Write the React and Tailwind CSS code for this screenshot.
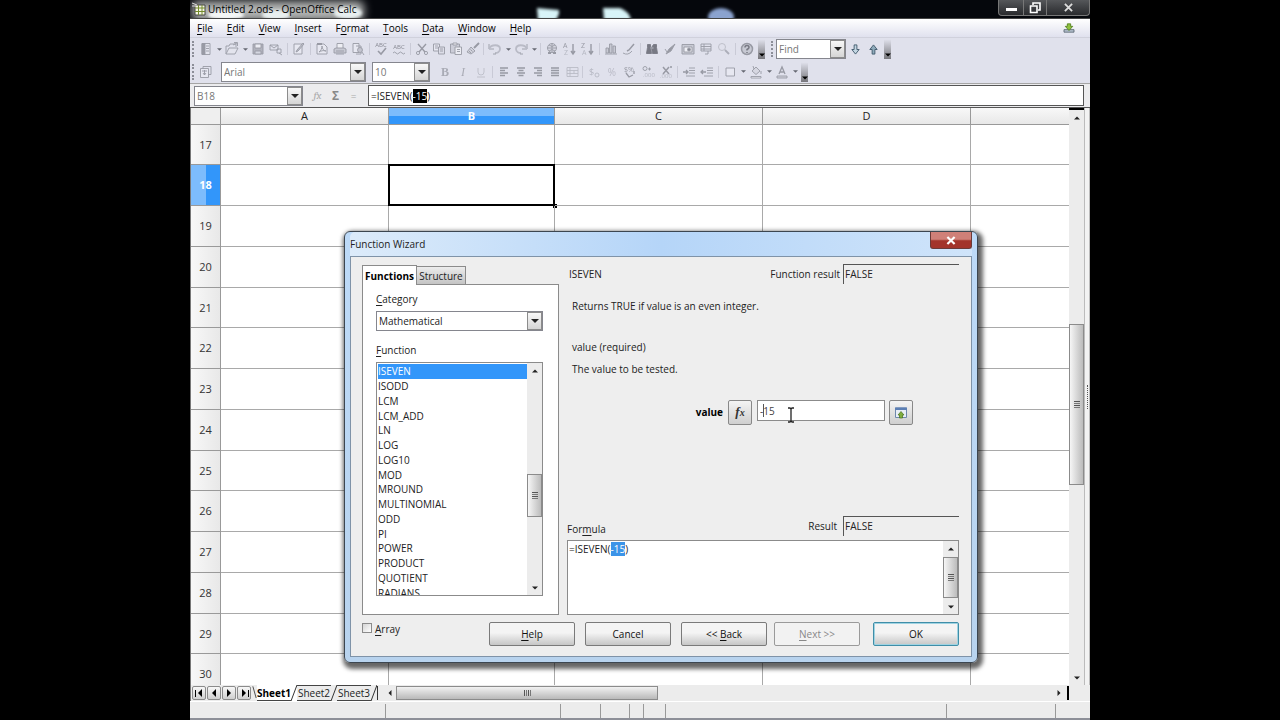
import { useState } from "react";

const columns = ["A", "B", "C", "D", ""];
const rows = [17, 18, 19, 20, 21, 22, 23, 24, 25, 26, 27, 28, 29, 30];
const functions = [
  "ISEVEN", "ISODD", "LCM", "LCM_ADD", "LN", "LOG", "LOG10", "MOD", "MROUND",
  "MULTINOMIAL", "ODD", "PI", "POWER", "PRODUCT", "QUOTIENT", "RADIANS",
];
const menus = ["File", "Edit", "View", "Insert", "Format", "Tools", "Data", "Window", "Help"];

const icons = {
  new: <><path d="M4 2.5h8v11H4z" fill="#e4e5ee" /><path d="M4 2.5h3v11H4z" fill="#8c8e98" /><path d="M8 5h3M8 7.5h3M8 10h3" /></>,
  open: <><path d="M2 13V5h3l1-2h6v3" /><path d="M2 13l3-6h9l-3 6z" fill="#e4e5ee" /><path d="M9 4l4-2M10 1.5h3.5V5" /></>,
  save: <><path d="M3 3h10v10H3z" fill="#a9abb5" /><path d="M5 3h6v4H5z" fill="#eeeff5" /><path d="M5 10h6v3H5z" fill="#d4d6e0" /></>,
  mail: <><path d="M2 4h8v5H2zM2 4l4 3 4-3" /><path d="M9 8h4v4H9zM11 12l3 2" /></>,
  edit: <><path d="M3 3h8v10H3z" fill="#e9eaf2" /><path d="M13 3l-6 7-2 1 1-2 6-7z" fill="#bbbdc8" /></>,
  pdf: <><path d="M3 3h7l3 3v7H3z" fill="#e9eaf2" /><path d="M5 11c2-1 3-4 3-6 0 3 2 5 4 5-3-1-5 0-7 1z" /><path d="M3 3h5" strokeWidth="2" /></>,
  print: <><path d="M5 7V2.5h6V7" fill="#f0f1f6" /><path d="M2 8l2-1h8l2 1v4H2z" fill="#c3c5cf" /><path d="M4 13h8M4 10h8" /></>,
  preview: <><path d="M3 2.5h6v9H3zM6 5h5v8H6" fill="#e9eaf2" /><circle cx="10" cy="9" r="2.5" /><path d="M12 11l2 3" /></>,
  spell: <><text x="8" y="6" textAnchor="middle" fontSize="6" stroke="none" fill="#777983">ABC</text><path d="M5 10l3 3 5-6" strokeWidth="1.6" /></>,
  autospell: <><text x="8" y="8" textAnchor="middle" fontSize="6" stroke="none" fill="#777983">ABC</text><path d="M2 12q1.500-2 3 0t3 0 3 0 3 0" /></>,
  cut: <><path d="M4 3l7 8M12 3l-7 8" strokeWidth="1.4" /><circle cx="4" cy="12" r="1.600" /><circle cx="12" cy="12" r="1.600" /></>,
  copy: <><path d="M2.500 3h6v7h-6z" fill="#e9eaf2" /><path d="M7.500 6h6v7h-6z" fill="#dcdde8" /><path d="M4 5h3M4 7h3M9 8h3M9 10h3" /></>,
  paste: <><path d="M2.500 3h9v9h-9z" fill="#c9cad5" /><path d="M5 2h4v2H5zM7 6h6.500v7.500H7z" fill="#eeeff5" /><path d="M9 8.500h3M9 10.500h3" /></>,
  brush: <><path d="M14 2l-5 5" strokeWidth="2" /><path d="M6 6l4 4-4 3-4-2z" fill="#cfd0da" /><path d="M4 10l2 2M5.500 8.500l2 2" /></>,
  undo: <><path d="M2 3v5h5" /><path d="M2 8c2-5 11-5 11 0 0 3-3 4-5 4" strokeWidth="1.800" stroke="#b3b5c0" /><path d="M6 13h3" /></>,
  redo: <><path d="M14 3v5H9" /><path d="M14 8c-2-5-11-5-11 0 0 3 3 4 5 4" strokeWidth="1.800" stroke="#b3b5c0" /><path d="M7 13h3" /></>,
  link: <><circle cx="8" cy="7" r="4.500" fill="#d5d6e0" /><path d="M3.500 7h9M8 2.500v9M5 4q3 3 6 0M5 10q3-3 6 0" /><path d="M4 12h3M9 12h3" strokeWidth="2" /></>,
  sortUp: <><text x="1" y="7" fontSize="7" stroke="none" fill="#8c8e98">A</text><text x="2" y="14" fontSize="7" stroke="none" fill="#aeb0bb">Z</text><path d="M11 3v9M9 10l2 3 2-3" strokeWidth="1.400" /></>,
  sortDown: <><text x="1" y="7" fontSize="7" stroke="none" fill="#8c8e98">Z</text><text x="2" y="14" fontSize="7" stroke="none" fill="#aeb0bb">A</text><path d="M11 3v9M9 10l2 3 2-3" strokeWidth="1.400" /></>,
  chart: <><path d="M3 7h2.500v5H3zM6.500 3H9v9H6.500zM10 5h2.500v7H10z" fill="#c3c5cf" /><path d="M2 13h12" /></>,
  draw: <><path d="M13 3L8 9l-2 1" strokeWidth="1.500" /><path d="M2 12q5 3 9-2" /></>,
  find: <><path d="M3.500 3.500h3v3l1 6h-5l1-6zM9.500 3.500h3v3l1 6h-5l-1-6z" fill="#666872" stroke="#666872" /><path d="M6.500 7h3" strokeWidth="2" /></>,
  nav: <><path d="M13 3L7 8l-3 5 5-3z" fill="#8c8e98" /><path d="M3 8l2 3" /></>,
  gallery: <><path d="M2 3.500h12v9.500H2z" fill="#c4c6d0" /><path d="M4 6h8v5H4z" fill="#f2f3f8" /><circle cx="9" cy="8.500" r="1.500" fill="#777983" /></>,
  sources: <><path d="M3 3h10v7H3zM3 5.500h10M3 8h10M6 3v7" /><path d="M10 10v3H7" /></>,
  zoom: <><circle cx="6" cy="6" r="3.500" stroke="#b3b5c0" /><path d="M9 9l4 4" strokeWidth="2" stroke="#a4a6b1" /></>,
  help: <><circle cx="8" cy="8" r="5.500" fill="#c3c5cf" strokeWidth="1.500" /><path d="M6 6.500q0-2 2-2t2 2q0 1-2 2v1M8 11v1" stroke="#666872" strokeWidth="1.500" /></>,
  styles: <><path d="M5 2.500h8v8H5z" /><path d="M2.500 4.500h8v9h-8z" fill="#e9eaf2" /><path d="M4 7h5M6.500 6v5M5 9l1.500 2L8 9" /></>,
  bold: <text x="8" y="12" textAnchor="middle" fontSize="12" fontWeight="bold" fontFamily="Liberation Serif" stroke="none" fill="#a0a2ac">B</text>,
  italic: <text x="8" y="12" textAnchor="middle" fontSize="12" fontStyle="italic" fontFamily="Liberation Serif" stroke="none" fill="#a0a2ac">I</text>,
  underline: <><path d="M5 4v4q0 3 3 3t3-3V4M4 13h8" stroke="#b6b8c2" /></>,
  left: <path d="M4 4h8M4 6.500h5M4 9h8M4 11.500h5" strokeWidth="1.300" />,
  center: <path d="M4 4h8M5.500 6.500h5M4 9h8M5.500 11.500h5" strokeWidth="1.300" />,
  right: <path d="M4 4h8M7 6.500h5M4 9h8M7 11.500h5" strokeWidth="1.300" />,
  justify: <path d="M4 4h8M4 6.500h8M4 9h8M4 11.500h8" strokeWidth="1.300" />,
  merge: <path d="M3 3.500h11v9H3zM3 6.500h11M3 9.500h11M6 3.500v9M10 6.500v3" stroke="#b3b5c0" />,
  currency: <><text x="3" y="11" fontSize="9" stroke="none" fill="#aeb0bb">$</text><circle cx="11" cy="11" r="2" stroke="#aeb0bb" /></>,
  percent: <text x="8" y="12" textAnchor="middle" fontSize="10" stroke="none" fill="#b3b5c0">%</text>,
  standard: <><text x="2" y="8" fontSize="7" stroke="none" fill="#8c8e98">$%</text><path d="M4 9l3 4 4-2M12 7v3" strokeWidth="1.300" /></>,
  addDec: <><circle cx="5" cy="4.500" r="2" /><path d="M8 5h3M9.500 3.500v3" /><text x="3" y="13" fontSize="6" stroke="none" fill="#aeb0bb">.000</text></>,
  delDec: <><path d="M5 3l6 7M11 3l-6 7M12 3h2" strokeWidth="1.500" /><text x="2" y="14" fontSize="6" stroke="none" fill="#aeb0bb">.000</text></>,
  indent: <><path d="M8 4h6M8 6.500h6M8 9h6M5 12h9" /><path d="M2 8h5M5 6l2 2-2 2" strokeWidth="1.300" /></>,
  outdent: <><path d="M8 4h6M8 6.500h6M8 9h6M5 12h9" /><path d="M7 8H2M4 6L2 8l2 2" strokeWidth="1.300" /></>,
  border: <path d="M4 4h8.500v8H4z" fill="#e9eaf2" />,
  fill: <><path d="M4 7l4-4 4 4-4 3.500zM6 5l-1-3" fill="#d5d6e0" /><path d="M3 12.500h10v1.500H3z" fill="#f5f5fa" /><path d="M13 7v3" /></>,
  fontColor: <><path d="M5 10l3-7 3 7M6 8h4" strokeWidth="1.300" /><path d="M3 12h10v2H3z" fill="#d0d1db" /></>,
};

const fileTools = [
  "new", "v", "open", "v", "save", "mail", "|", "edit", "|", "pdf", "print", "preview", "|", "spell", "autospell", "|",
];
const clipboardTools = ["cut", "copy", "paste", "brush"];
const insertTools = [
  "|", "undo", "v", "redo", "v", "|", "link", "sortUp", "sortDown", "|", "chart", "draw", "|",
  "find", "nav", "gallery", "sources", "zoom", "|", "help",
];
const alignTools = ["left", "center", "right", "justify", "merge"];
const numberTools = [
  "|", "currency", "percent", "standard", "addDec", "delDec", "|", "indent", "outdent", "|",
  "border", "v", "fill", "v", "fontColor", "v",
];

function Icon({ name }) {
  return (
    <svg viewBox="0 0 16 16" className="h-4 w-4 shrink-0 opacity-85" fill="none" stroke="#8c8e98" strokeWidth="0.9">
      {icons[name]}
    </svg>
  );
}

function Triangle({ dir = "down", className = "fill-[#222]" }) {
  const paths = { down: "M0 2h8L4 6z", up: "M0 6h8L4 2z", left: "M6 0v8L2 4z", right: "M2 0v8l4-4z" };
  return (
    <svg viewBox="0 0 8 8" className={`h-[6px] w-[6px] ${className}`}>
      <path d={paths[dir]} />
    </svg>
  );
}

function Tools({ items, narrow }) {
  return items.map((item, i) => {
    if (item === "|") return <span key={i} className="mx-[2px] h-3 w-px bg-[#c9cad6]" />;
    if (item === "v") {
      return (
        <button key={i} aria-label="More" className="flex w-2 justify-center">
          <svg viewBox="0 0 8 8" className="h-[5px] w-[5px] fill-[#666872]"><path d="M0 2h8L4 6z" /></svg>
        </button>
      );
    }
    return (
      <button key={i} aria-label={item} className={`flex shrink-0 justify-center ${narrow ? "w-[17px]" : "w-[18px]"}`}>
        <Icon name={item} />
      </button>
    );
  });
}

function Grip() {
  return <span className="mr-[3px] ml-[2px] h-4 w-[2px] border-l-2 border-dotted border-[#8c8e98]" />;
}

function Overflow() {
  return (
    <button aria-label="Toolbar options" className="ml-[2px] flex h-5 w-[7px] items-end justify-center bg-linear-to-b from-[#e2e3ee] to-[#77777c] pb-px">
      <Triangle className="fill-black" />
    </button>
  );
}

function Combo({ label, value, className, muted = true }) {
  return (
    <div className={`relative h-5 border border-[#85868e] bg-white ${className}`}>
      <select
        aria-label={label}
        className={`block h-full w-full appearance-none bg-transparent pr-4 pl-[2px] outline-none ${muted ? "text-[#777]" : "text-[#222]"}`}
      >
        <option>{value}</option>
      </select>
      <span className="pointer-events-none absolute inset-y-0 right-0 flex w-[15px] items-center justify-center border border-[#8c8c8c] bg-linear-to-b from-[#f8f8f8] to-[#d5d5d5]">
        <svg viewBox="0 0 8 8" className="h-2 w-2 fill-[#222]"><path d="M0 2h8L4 6z" /></svg>
      </span>
    </div>
  );
}

function ScrollBar({ before, thumb, after, className = "w-[15px]" }) {
  return (
    <div className={`flex shrink-0 flex-col bg-[#ececec] ${className}`}>
      <button aria-label="Scroll up" className="flex h-[15px] items-center justify-center"><Triangle dir="up" /></button>
      <div className="flex flex-1 flex-col">
        <div className="basis-0" style={{ flexGrow: before }} />
        <div
          className="flex basis-0 flex-col items-center justify-center gap-px border border-[#8b8b8b] bg-linear-to-r from-[#f6f6f6] to-[#bcbcbc]"
          style={{ flexGrow: thumb }}
        >
          <span className="h-px w-[6px] bg-[#555]" />
          <span className="h-px w-[6px] bg-[#777]" />
          <span className="h-px w-[6px] bg-[#555]" />
          <span className="h-px w-[6px] bg-[#777]" />
        </div>
        <div className="basis-0" style={{ flexGrow: after }} />
      </div>
      <button aria-label="Scroll down" className="flex h-[15px] items-center justify-center"><Triangle /></button>
    </div>
  );
}

// Repeats the prefix invisibly so the mark lands on the selected argument
function SelectedArgument({ markClass, className }) {
  return (
    <div aria-hidden="true" className={`pointer-events-none absolute inset-0 ${className}`}>
      <span className="invisible">=ISEVEN(</span>
      <mark className={markClass}>-15</mark>
    </div>
  );
}

function TitleBar() {
  return (
    <header className="relative flex h-[19px] shrink-0 items-center border-b border-[#444] bg-[#05070c] pl-[2px]">
      <svg className="absolute inset-0 h-full w-full" viewBox="0 0 900 19" preserveAspectRatio="xMinYMin slice" aria-hidden="true">
        <defs>
          <filter id="glow" filterUnits="userSpaceOnUse" x="-20" y="-20" width="300" height="60"><feGaussianBlur stdDeviation="4" /></filter>
          <filter id="soft" x="-30%" y="-50%" width="160%" height="200%"><feGaussianBlur stdDeviation="1.5" /></filter>
        </defs>
        <rect x="2" y="1" width="172" height="20" rx="6" fill="#b2b4b3" filter="url(#glow)" />
        <ellipse cx="36" cy="15" rx="18" ry="5" fill="#f4f6f6" filter="url(#soft)" />
        <ellipse cx="86" cy="15" rx="14" ry="5" fill="#e8efef" filter="url(#soft)" />
        <ellipse cx="158" cy="13" rx="14" ry="6" fill="#e8efef" filter="url(#soft)" />
        <path d="M347 8l22 2v4l-3 6h-18z" fill="#d8f4f8" filter="url(#soft)" />
        <path d="M413 8h17q10 4 11 12h-27z" fill="#d8f4f8" filter="url(#soft)" />
        <ellipse cx="531" cy="17" rx="13" ry="9" fill="#8ba3cf" filter="url(#soft)" />
      </svg>
      <svg viewBox="0 0 14 14" className="relative h-[14px] w-[14px]">
        <path d="M3 3h10v10H3z" fill="#f4f5e4" stroke="#444" />
        <path d="M3 6h10M3 9.500h10M6.500 3v10M10 3v10" stroke="#748b2e" />
        <path d="M0 1l5 2M0 4h4" stroke="#ddd" />
      </svg>
      <h1 className="relative pl-[2px] text-black">Untitled 2.ods - OpenOffice Calc</h1>
      <div className="relative ml-auto flex h-4 self-start rounded-b border border-t-0 border-[#777] bg-linear-to-b from-[#55575a] to-[#2a2b2e]">
        <button aria-label="Minimize" className="flex w-[25px] items-center justify-center border-r border-[#777]">
          <span className="mt-1 h-[3px] w-[11px] bg-white" />
        </button>
        <button aria-label="Restore" className="flex w-[23px] items-center justify-center border-r border-[#777]">
          <svg viewBox="0 0 12 12" className="h-3 w-3" fill="none" stroke="#fff" strokeWidth="1.600"><path d="M4 3V1h7v7H9M1.500 4h6.500v6.500H1.500z" /></svg>
        </button>
        <button aria-label="Close" className="flex w-[42px] items-center justify-center">
          <svg viewBox="0 0 10 10" className="h-[9px] w-[9px]" stroke="#ddd" strokeWidth="2"><path d="M1 1l8 8M9 1L1 9" /></svg>
        </button>
      </div>
    </header>
  );
}

function MenuBar() {
  return (
    <nav className="flex h-[19px] shrink-0 items-center border-b border-[#d0d1dc] bg-linear-to-b from-white to-[#e0e1ee] text-black">
      {menus.map((menu) => {
        const at = menu === "Format" ? 1 : 0;
        return (
          <button key={menu} className="px-[7px]">
            {menu.slice(0, at)}<u className="underline-offset-2">{menu[at]}</u>{menu.slice(at + 1)}
          </button>
        );
      })}
      <button aria-label="Update available" className="mr-[15px] ml-auto">
        <svg viewBox="0 0 14 12" className="h-[10px] w-[12px]" strokeWidth="1">
          <path d="M1 8h12v3H1z" fill="#b6c3d0" stroke="#54616e" />
          <path d="M5 1h4v3h2.500L7 9 2.500 4H5z" fill="#8fc13e" stroke="#4f7d1c" />
        </svg>
      </button>
    </nav>
  );
}

function Toolbars() {
  return (
    <div className="shrink-0 bg-[#e0e1ec]">
      <div className="flex h-[22px] items-center">
        <Grip />
        <Tools items={fileTools} />
        <Tools items={clipboardTools} narrow />
        <Tools items={insertTools} />
        <Overflow />
        <span className="w-1" />
        <Grip />
        <Combo label="Find" value="Find" className="w-[70px]" />
        <button aria-label="Find next" className="flex w-[18px] justify-center">
          <svg viewBox="0 0 12 12" className="h-[11px] w-[11px]" fill="#c3d6e2" stroke="#3f596b"><path d="M4.500 1h3v5H10l-4 5-4-5h2.500z" /></svg>
        </button>
        <button aria-label="Find previous" className="flex w-[18px] justify-center">
          <svg viewBox="0 0 12 12" className="h-[11px] w-[11px]" fill="#8fabbb" stroke="#3f596b"><path d="M4.500 11h3V6H10L6 1 2 6h2.500z" /></svg>
        </button>
        <Overflow />
      </div>
      <div className="flex h-[23px] items-center">
        <Grip />
        <Tools items={["styles"]} />
        <Combo label="Font name" value="Arial" className="ml-[6px] w-[145px]" />
        <Combo label="Font size" value="10" className="mx-[6px] w-[58px]" />
        <Tools items={["bold", "italic", "underline", "|"]} />
        <Tools items={alignTools} narrow />
        <Tools items={numberTools} />
        <Overflow />
      </div>
    </div>
  );
}

function FormulaBar() {
  return (
    <div className="flex h-6 shrink-0 items-center border-t border-[#a5a5a5] bg-[#ececee] pl-1">
      <Combo label="Name box" value="B18" className="w-[109px]" />
      <div className="flex w-[65px] justify-center gap-[2px] text-[#888]">
        <button aria-label="Function wizard" className="w-4 font-serif text-[11px] italic text-[#aaa]">fx</button>
        <button aria-label="Sum" className="w-4 text-[12px] font-bold">Σ</button>
        <button aria-label="Function" className="w-4 text-[#aaa]">=</button>
      </div>
      <div className="relative mr-[6px] h-[21px] flex-1 border border-[#555] bg-white">
        <input aria-label="Input line" defaultValue="=ISEVEN(-15)" className="block h-full w-full px-[2px] text-[#222] outline-none" />
        <SelectedArgument className="px-[2px] pt-[2px]" markClass="bg-black text-white" />
      </div>
    </div>
  );
}

function Sheet() {
  return (
    <div className="flex min-h-0 flex-1 border-t border-[#555]">
      <div className="min-w-0 flex-1 overflow-hidden border-l border-[#777] bg-white">
        <table className="w-full table-fixed border-separate border-spacing-0">
          <colgroup>
            <col className="w-[30px]" />
            <col className="w-[168px]" />
            <col className="w-[166px]" />
            <col className="w-[208px]" />
            <col className="w-[208px]" />
            <col />
          </colgroup>
          <thead>
            <tr className="h-[17px]">
              <th className="border-r border-b border-[#999] bg-[#efefef] p-0" />
              {columns.map((col) => (
                <th
                  key={col}
                  className={`border-r border-b border-[#999] p-0 text-[11px] leading-4 last:border-r-0 ${
                    col === "B"
                      ? "bg-linear-to-b from-[#7dbcfc] from-50% to-[#3296fa] to-50% font-bold text-white"
                      : "bg-linear-to-b from-[#f8f8f8] to-[#e8e8e8] font-normal text-[#222]"
                  }`}
                >
                  {col}
                </th>
              ))}
            </tr>
          </thead>
          <tbody>
            {rows.map((row, i) => (
              <tr key={row} className={i % 4 === 0 ? "h-[40px]" : "h-[41px]"}>
                <th
                  className={`border-r border-b border-[#999] p-0 text-[11px] ${
                    row === 18
                      ? "bg-linear-to-r from-[#7dbcfc] from-50% to-[#3296fa] to-50% font-bold text-white"
                      : "bg-linear-to-r from-[#f8f8f8] to-[#e8e8e8] font-normal text-[#333]"
                  }`}
                >
                  {row}
                </th>
                {columns.map((col) => (
                  <td key={col} className="relative border-r border-b border-[#a9a9a9] p-0 last:border-r-0">
                    {row === 18 && col === "B" && (
                      <div className="absolute -inset-px border-2 border-black">
                        <span className="absolute -right-[4px] -bottom-[4px] h-1 w-1 bg-black" />
                      </div>
                    )}
                  </td>
                ))}
              </tr>
            ))}
          </tbody>
        </table>
      </div>
      <ScrollBar before={200} thumb={160} after={186} className="w-[15px] border-t-2 border-black" />
      <div className="flex w-[6px] flex-col items-center justify-center border-x border-[#bbb] bg-[#f2f2f2]">
        <span className="h-6 border-l border-dotted border-[#555]" />
      </div>
    </div>
  );
}

function SheetBar() {
  const jumps = [
    ["First sheet", "left", true],
    ["Previous sheet", "left", false],
    ["Next sheet", "right", false],
    ["Last sheet", "right", true],
  ];
  return (
    <div className="flex h-4 shrink-0 items-center border-l border-[#777] bg-[#ececec] pl-px">
      {jumps.map(([label, dir, edge]) => (
        <button key={label} aria-label={label} className="mr-px flex h-[14px] w-[14px] items-center justify-center rounded-[2px] border border-[#8b8b8b] bg-linear-to-b from-[#f8f8f8] to-[#cfcfcf]">
          {edge && dir === "left" && <span className="h-[7px] w-px bg-black" />}
          <svg viewBox="0 0 8 8" className="h-[8px] w-[8px] fill-black"><path d={dir === "left" ? "M6 0v8L2 4z" : "M2 0v8l4-4z"} /></svg>
          {edge && dir === "right" && <span className="h-[7px] w-px bg-black" />}
        </button>
      ))}
      <svg viewBox="0 0 6 16" className="h-4 w-[5px]" stroke="#333" fill="none"><path d="M1 0l4 14" /></svg>
      {["Sheet1", "Sheet2", "Sheet3"].map((name, i) => (
        <div key={name} className={`flex h-4 items-center ${i === 0 ? "bg-white" : ""}`}>
          <button className={`h-full w-[34px] border-b border-[#444] text-center leading-[14px] ${i === 0 ? "font-bold text-black" : "border-t text-[#222]"}`}>
            {name}
          </button>
          <svg viewBox="0 0 6 16" className="h-4 w-[6px]" stroke="#333" fill="none"><path d="M0 16L6 0" /></svg>
        </div>
      ))}
      <span className="mr-[3px] h-[14px] w-px bg-[#333]" />
      <span className="w-[3px]" />
      <button aria-label="Scroll left" className="flex w-3 justify-center"><Triangle dir="left" /></button>
      <div className="flex h-[14px] flex-1">
        <div className="flex w-2/5 items-center justify-center gap-px border border-[#8b8b8b] bg-linear-to-b from-[#f2f2f2] to-[#b9b9b9]">
          <span className="h-[6px] w-px bg-[#555]" />
          <span className="h-[6px] w-px bg-[#777]" />
          <span className="h-[6px] w-px bg-[#555]" />
          <span className="h-[6px] w-px bg-[#777]" />
        </div>
      </div>
      <button aria-label="Scroll right" className="flex w-4 justify-center"><Triangle dir="right" /></button>
      <span className="mr-[21px] h-[14px] w-[2px] bg-black" />
    </div>
  );
}

function StatusBar() {
  return (
    <footer className="flex h-[19px] shrink-0 border-t border-b-2 border-t-white border-b-[#8d8f98] bg-[#ececec] pt-[2px]">
      <div className="w-[196px] border-r border-[#999]" />
      <div className="w-[175px] border-r border-[#999]" />
      <div className="w-10 border-r border-[#999]" />
      <div className="w-[29px] border-r border-[#999]" />
      <div className="w-[14px] border-r border-[#999]" />
      <div className="w-[22px] border-r border-[#999]" />
      <div className="flex-1 border-r border-[#999]" />
      <div className="w-[109px] border-r border-[#999]" />
      <div className="w-[34px]" />
    </footer>
  );
}

function WizardButton({ children, className = "border-[#7a7a7a]", disabled }) {
  return (
    <button
      disabled={disabled}
      className={`h-6 w-[86px] rounded-[2px] border ${
        disabled ? "bg-[#f2f2f2] text-[#888]" : "bg-linear-to-b from-[#f4f4f4] from-45% to-[#c6c6c6] text-[#111]"
      } ${className}`}
    >
      {children}
    </button>
  );
}

function FunctionPicker() {
  const [selected, setSelected] = useState("ISEVEN");
  return (
    <div className="flex min-h-0 w-[197px] shrink-0 flex-col pt-2">
      <div role="tablist" className="flex h-[19px] shrink-0 items-end">
        <button role="tab" aria-selected="true" className="relative -mb-px h-5 w-[55px] border border-b-0 border-[#8b8b8b] bg-white font-bold leading-[18px] text-black">
          Functions
        </button>
        <button role="tab" aria-selected="false" className="h-[18px] w-[49px] border border-b-0 border-l-0 border-[#8b8b8b] bg-linear-to-b from-[#ececec] to-[#c4c4c4] text-[#222]">
          Structure
        </button>
      </div>
      <div className="flex min-h-0 flex-1 flex-col border border-[#8b8b8b] bg-white px-[13px] pt-[6px] pb-[18px]">
        <span className="h-4 shrink-0 leading-4"><u className="underline-offset-2">C</u>ategory</span>
        <Combo label="Category" value="Mathematical" className="mt-1 w-[167px] shrink-0" muted={false} />
        <span id="function-label" className="mt-[11px] h-4 shrink-0 leading-4"><u className="underline-offset-2">F</u>unction</span>
        <div className="mt-1 flex min-h-0 w-[167px] flex-1 border border-[#8b8b8b]">
          <ul role="listbox" aria-labelledby="function-label" className="flex-1 overflow-hidden pt-px pl-px">
            {functions.map((name, i) => (
              <li
                key={name}
                role="option"
                aria-selected={name === selected}
                onClick={() => setSelected(name)}
                className={`leading-[15px] ${i % 4 === 3 ? "h-[14px]" : "h-[15px]"} ${
                  name === selected ? "bg-[#3296fa] text-white" : "text-[#222]"
                }`}
              >
                {name}
              </li>
            ))}
          </ul>
          <ScrollBar before={97} thumb={41} after={64} />
        </div>
      </div>
    </div>
  );
}

function ResultBox({ id, children }) {
  return (
    <output id={id} className="ml-[3px] h-5 w-[116px] border-t border-l border-t-[#555] border-l-[#555] pl-px leading-[19px]">
      {children}
    </output>
  );
}

function FunctionDetails() {
  return (
    <div className="flex min-w-0 flex-1 flex-col pt-[7px]">
      <div className="flex h-5 items-center">
        <span className="mr-auto pl-[2px]">ISEVEN</span>
        <label htmlFor="function-result">Function result</label>
        <ResultBox id="function-result">FALSE</ResultBox>
      </div>
      <p className="mt-[14px] pl-[5px] leading-4">Returns TRUE if value is an even integer.</p>
      <p className="mt-[25px] pl-[5px] leading-4">value (required)</p>
      <p className="mt-[6px] pl-[5px] leading-4">The value to be tested.</p>

      <div className="mt-[23px] flex pr-[46px]">
        <label htmlFor="value" className="ml-auto pr-[5px] font-bold leading-6 text-black">value</label>
        <button aria-label="Insert function" className="h-[25px] w-6 rounded-[2px] border border-[#888] bg-linear-to-b from-[#f4f4f4] to-[#cfcfcf] font-[Liberation_Serif] text-[13px] font-bold italic leading-5 text-[#333]">
          f<span className="text-[10px]">x</span>
        </button>
        <div className="relative mr-1 ml-[5px] h-[21px] w-[128px]">
          <input id="value" defaultValue="-15" className="block h-full w-full border border-[#8b8b8b] bg-white px-[2px] text-[#444] outline-none" />
          <div aria-hidden="true" className="pointer-events-none absolute top-1 left-[3px] flex h-[13px]">
            <span className="invisible">-</span>
            <span className="w-px bg-[#555]" />
          </div>
          <svg viewBox="0 0 8 16" className="pointer-events-none absolute top-[7px] left-[30px] h-4 w-2" fill="none" stroke="#222" strokeWidth="1.300">
            <path d="M1 1h2l1 1 1-1h2M1 15h2l1-1 1 1h2M4 2v12" />
          </svg>
        </div>
        <button aria-label="Shrink" className="flex h-[25px] w-6 items-center justify-center rounded-[2px] border border-[#888] bg-linear-to-b from-[#f4f4f4] to-[#cfcfcf]">
          <svg viewBox="0 0 12 12" className="h-3 w-3">
            <path d="M0.500 1h11v9.500H0.500z" fill="#e8eef6" stroke="#6f88ad" />
            <path d="M0 0.500h12v2.500H0z" fill="#5c7fb4" />
            <path d="M6 4.500l3 3.500H7.500v3h-3V8H3z" fill="#7fae3f" stroke="#47701b" strokeWidth="0.700" />
          </svg>
        </button>
      </div>

      <div className="mt-auto flex h-5">
        <label htmlFor="formula" className="mr-auto pt-[5px]">For<u className="underline-offset-2">m</u>ula</label>
        <label htmlFor="result" className="leading-5">Result</label>
        <span className="w-[3px]" />
        <ResultBox id="result">FALSE</ResultBox>
      </div>
      <div className="mt-1 flex h-[75px] border border-[#8b8b8b] bg-white">
        <div className="relative flex-1">
          <textarea id="formula" defaultValue="=ISEVEN(-15)" className="block h-full w-full resize-none pt-px pl-px leading-[15px] text-[#222] outline-none" />
          <SelectedArgument className="pt-px pl-px leading-[15px]" markClass="bg-[#3c94e8] text-white" />
        </div>
        <ScrollBar before={1} thumb={42} after={1} />
      </div>
    </div>
  );
}

function FunctionWizard() {
  return (
    <section
      role="dialog"
      aria-label="Function Wizard"
      className="absolute top-[231px] left-[154px] flex h-[432px] w-[634px] flex-col rounded-[6px] border border-[#3c4650] bg-linear-to-b from-[#bddaf8] to-[#b8d3ee] px-[5px] pb-[5px] shadow-[2px_3px_4px_3px_rgba(0,0,0,0.6)]"
    >
      <div className="flex h-6 shrink-0 items-center rounded-t-[5px] bg-linear-to-r from-[#dcebfa] via-[#b5d5f8] to-[#cfe4fa]">
        <h2 className="text-[#222]">Function Wizard</h2>
        <button aria-label="Close" className="ml-auto flex h-[17px] w-[42px] items-center justify-center self-start rounded-b-[3px] border border-t-0 border-[#6b3a38] bg-linear-to-b from-[#cf8078] from-45% to-[#a3342b] to-55%">
          <svg viewBox="0 0 10 10" className="h-[9px] w-[10px]" stroke="#fff" strokeWidth="2.400"><path d="M1 1l8 8M9 1L1 9" /></svg>
        </button>
      </div>
      <form className="flex min-h-0 flex-1 flex-col border border-[#7f93a8] bg-[#eeeeee] pr-[12px] pb-[9px] pl-[11px]" onSubmit={(e) => e.preventDefault()}>
        <div className="flex min-h-0 flex-1 gap-2">
          <FunctionPicker />
          <FunctionDetails />
        </div>
        <div className="mt-[7px] flex h-[25px] shrink-0 items-start">
          <label className="mr-auto -mt-[3px] flex items-center gap-[3px]">
            <input type="checkbox" className="h-[10px] w-[10px] appearance-none border border-[#8b8b8b] bg-linear-to-br from-[#d5d5d5] to-white" />
            <span className="pt-[2px]"><u className="underline-offset-2">A</u>rray</span>
          </label>
          <div className="flex gap-[10px]">
            <WizardButton><u className="underline-offset-2">H</u>elp</WizardButton>
            <WizardButton>Cancel</WizardButton>
            <WizardButton>&lt;&lt; <u className="underline-offset-2">B</u>ack</WizardButton>
          </div>
          <div className="ml-[7px] flex gap-[13px]">
            <WizardButton disabled className="border-[#9a9a9a]"><u className="underline-offset-2">N</u>ext &gt;&gt;</WizardButton>
            <WizardButton className="border-[#3f8ea8] ring-1 ring-[#9fd3e2] ring-inset">OK</WizardButton>
          </div>
        </div>
      </form>
    </section>
  );
}

export default function App() {
  return (
    <div className="h-screen overflow-hidden bg-black">
      <main className="relative mx-auto flex h-full w-full max-w-[900px] flex-col overflow-hidden bg-[#ececec] font-['Open_Sans','Noto_Sans',sans-serif] text-[10px] leading-4 text-[#222]">
        <TitleBar />
        <MenuBar />
        <Toolbars />
        <FormulaBar />
        <Sheet />
        <SheetBar />
        <StatusBar />
        <FunctionWizard />
      </main>
    </div>
  );
}
